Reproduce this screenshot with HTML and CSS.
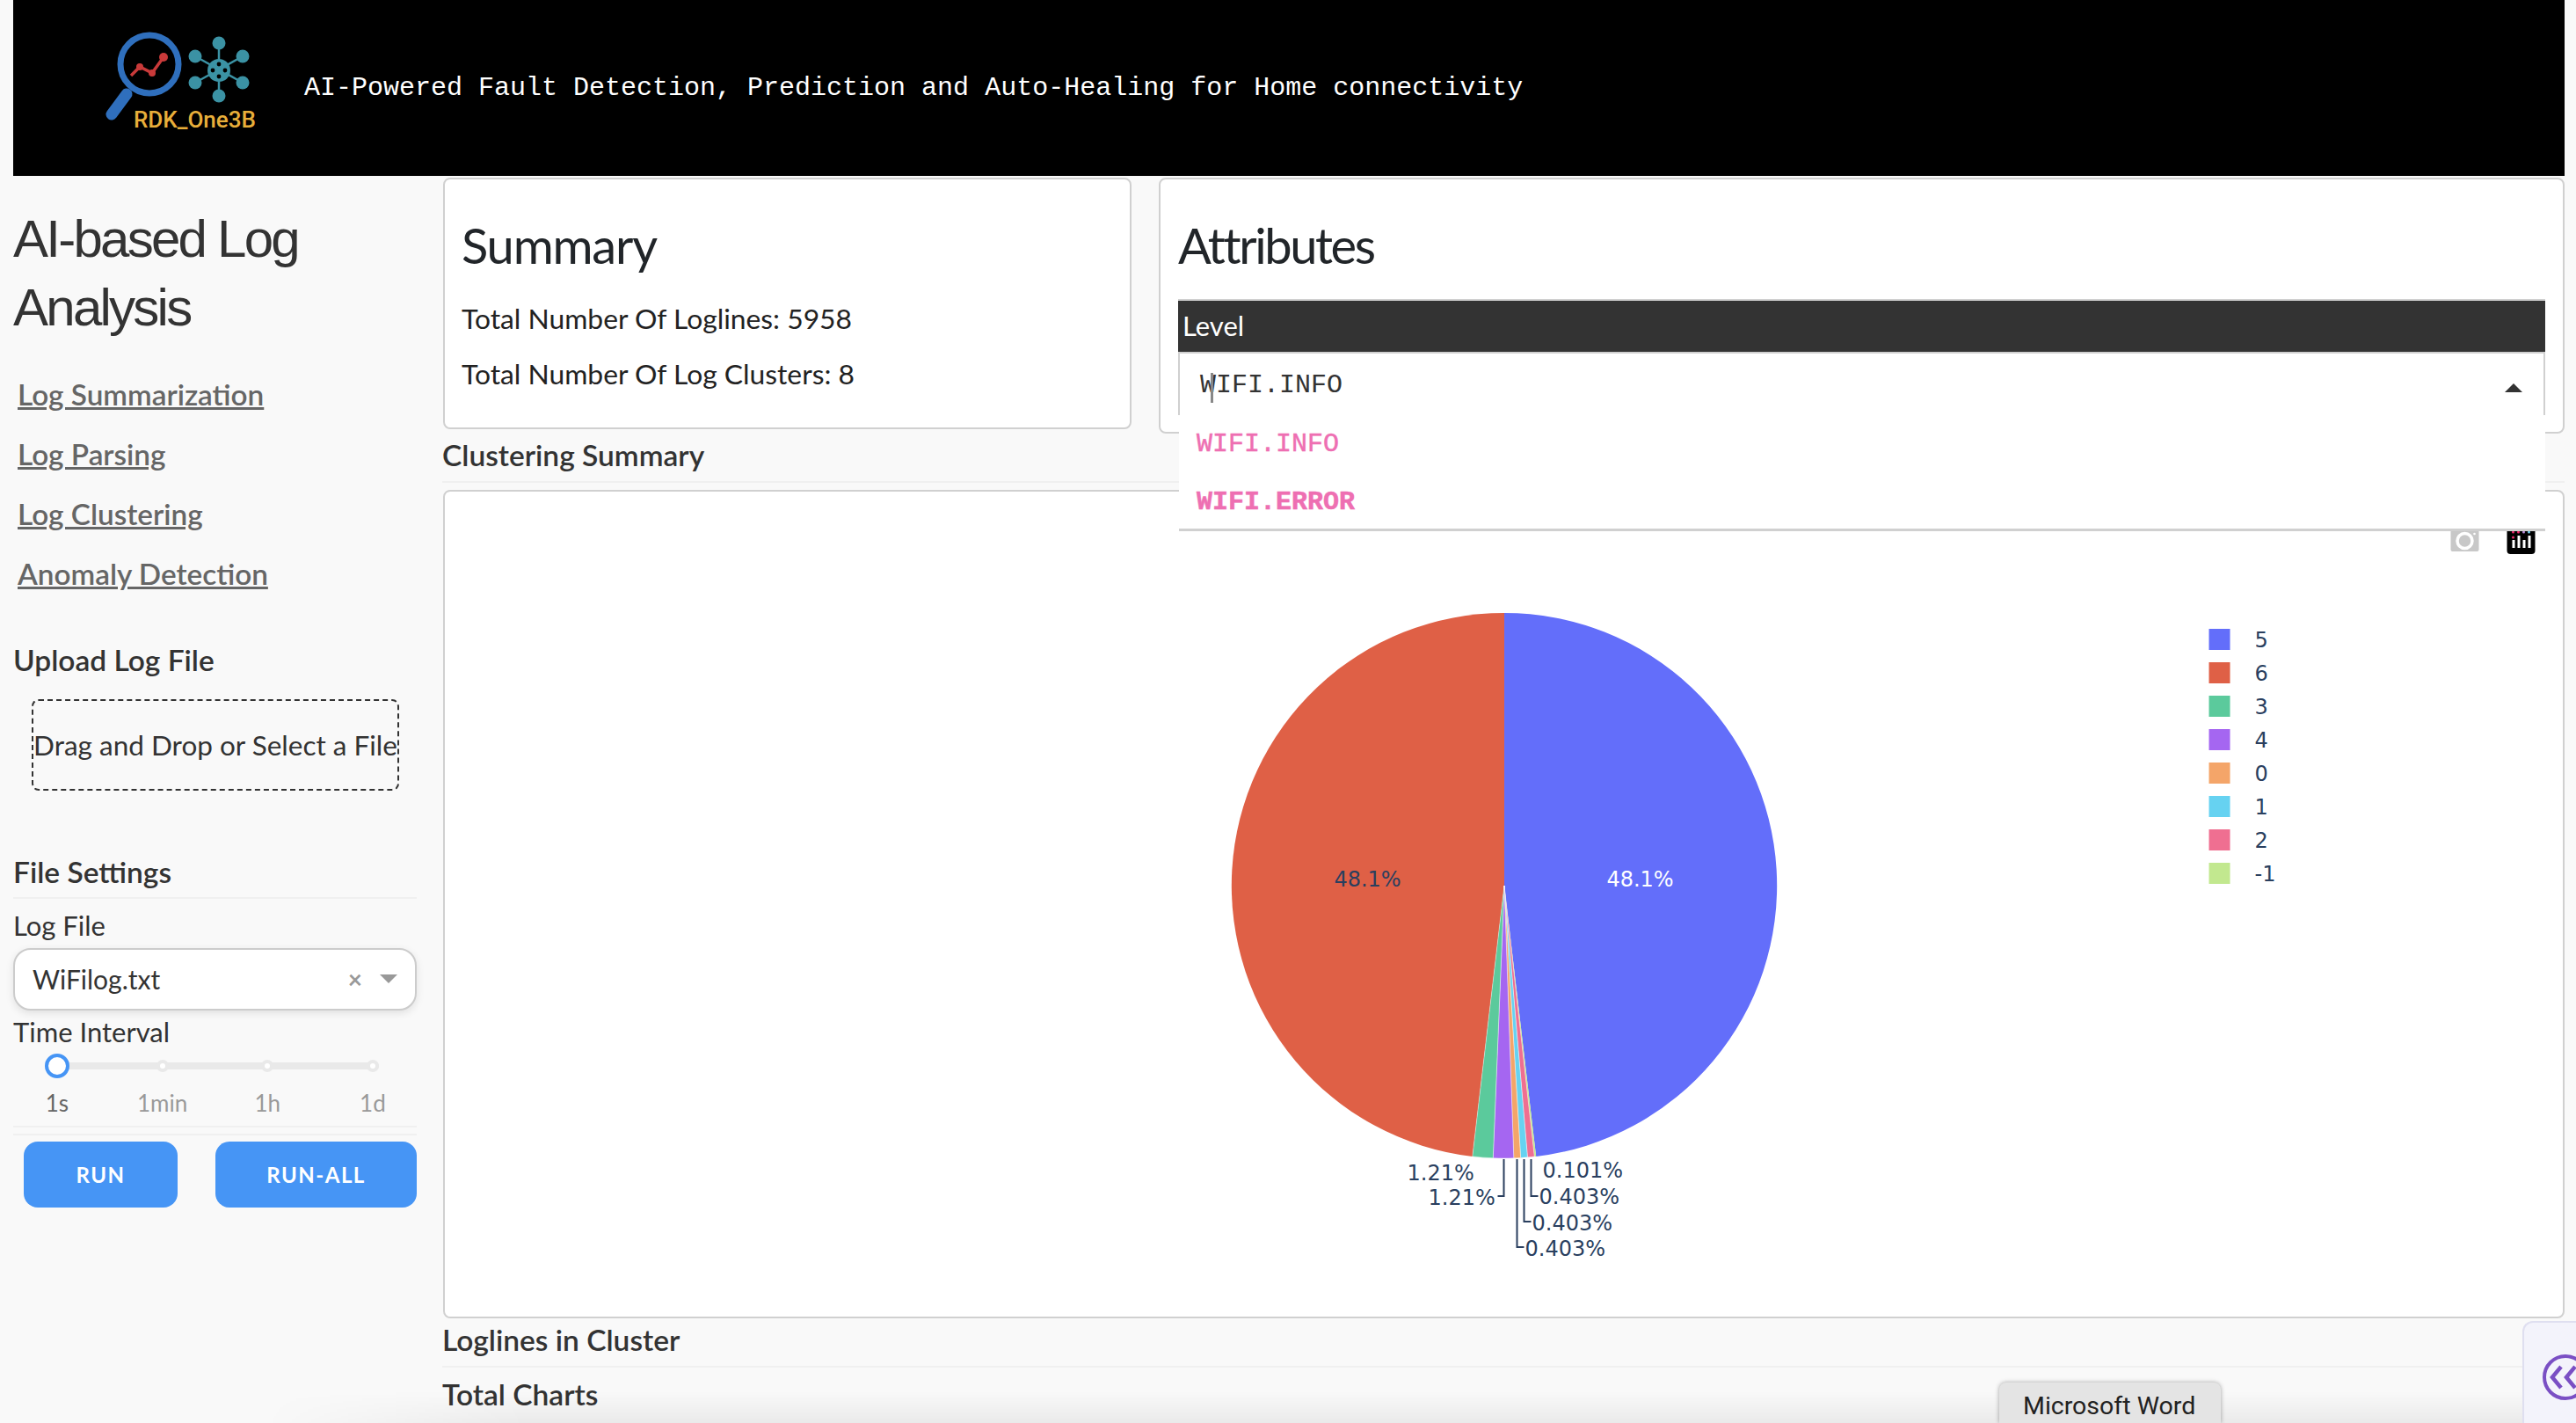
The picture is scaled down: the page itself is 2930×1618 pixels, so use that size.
FILE: index.html
```html
<!DOCTYPE html>
<html lang="en">
<head>
    <meta charset="UTF-8">
    <title>RDK_One3B - AI-based Log Analysis</title>
    <link rel="stylesheet" href="styles.css">
</head>
<body>
    <header class="banner">
        <svg class="logo" viewBox="0 0 200 130" aria-label="RDK_One3B logo">
            <g fill="none" stroke="#2f6fbd">
                <circle cx="65" cy="58" r="33" stroke-width="7"/>
                <path d="M39 92 L22 115" stroke-width="13" stroke-linecap="round"/>
            </g>
            <path d="M44 71 L54 61 L68 68 L81 50" fill="none" stroke="#c93a3a" stroke-width="3.5"/>
            <g fill="#c93a3a">
                <circle cx="54" cy="61" r="4"/>
                <circle cx="68" cy="68" r="4"/>
                <circle cx="81" cy="50" r="5"/>
            </g>
            <g stroke="#3b92a4" stroke-width="2.5">
                <path d="M144 34 V94 M117 49 L171 79 M171 49 L117 79"/>
            </g>
            <g fill="#3b92a4">
                <circle cx="144" cy="65" r="13"/>
                <circle cx="144" cy="34" r="7.5"/>
                <circle cx="171" cy="49" r="7.5"/>
                <circle cx="171" cy="79" r="7.5"/>
                <circle cx="144" cy="94" r="7.5"/>
                <circle cx="117" cy="79" r="7.5"/>
                <circle cx="117" cy="49" r="7.5"/>
            </g>
            <g fill="#000">
                <circle cx="144" cy="58" r="2.4"/>
                <circle cx="137" cy="65" r="2.4"/>
                <circle cx="151" cy="65" r="2.4"/>
                <circle cx="144" cy="72" r="2.4"/>
            </g>
            <text class="logo-text" x="47" y="130">RDK_One3B</text>
        </svg>
        <span class="banner-title">AI-Powered Fault Detection, Prediction and Auto-Healing for Home connectivity</span>
    </header>

    <div class="page">
        <aside class="sidebar">
            <h2 class="app-title">AI-based Log Analysis</h2>
            <nav class="side-nav">
                <a href="#">Log Summarization</a>
                <a href="#">Log Parsing</a>
                <a href="#">Log Clustering</a>
                <a href="#">Anomaly Detection</a>
            </nav>

            <h5 class="side-heading upload-heading">Upload Log File</h5>
            <div class="upload-box">Drag and Drop or Select a File</div>

            <h5 class="side-heading settings-heading">File Settings</h5>
            <label class="field-label">Log File</label>
            <div class="select-box">
                <span class="select-value">WiFilog.txt</span>
                <span class="select-clear">×</span>
                <span class="select-arrow"></span>
            </div>
            <label class="field-label interval-label">Time Interval</label>
            <div class="slider">
                <div class="slider-rail">
                    <span class="slider-handle"></span>
                    <span class="slider-dot"></span>
                    <span class="slider-dot"></span>
                    <span class="slider-dot"></span>
                </div>
                <div class="slider-marks">
                    <span class="mark-active">1s</span>
                    <span>1min</span>
                    <span>1h</span>
                    <span>1d</span>
                </div>
            </div>
            <div class="button-row">
                <button class="btn btn-run">RUN</button>
                <button class="btn btn-all">RUN-ALL</button>
            </div>
        </aside>

        <main class="content">
            <div class="top-row">
                <section class="card summary-card">
                    <h3 class="card-title">Summary</h3>
                    <p class="summary-line">Total Number Of Loglines: 5958</p>
                    <p class="summary-line">Total Number Of Log Clusters: 8</p>
                </section>
                <section class="card attributes-card">
                    <h3 class="card-title">Attributes</h3>
                    <div class="table-head">Level</div>
                    <div class="table-cell">
                        <span class="cell-value">WIFI.INFO</span>
                        <span class="text-cursor"></span>
                        <span class="cell-arrow"></span>
                    </div>
                    <div class="dropdown">
                        <div class="dropdown-option">WIFI.INFO</div>
                        <div class="dropdown-option option-bold">WIFI.ERROR</div>
                    </div>
                </section>
            </div>

            <h5 class="section-title clustering-title">Clustering Summary</h5>
            <section class="card chart-card">
                <svg class="chart" viewBox="506 559 2408 938">
                    <!-- modebar -->
                    <g class="modebar">
                        <path d="M2789 600 H2797 L2800 596 H2808 L2811 600 H2817 Q2819 600 2819 602 V625 Q2819 627 2817 627 H2789 Q2787 627 2787 625 V602 Q2787 600 2789 600 Z" fill="#c8c8c8"/>
                        <circle cx="2803" cy="615" r="8.5" fill="none" stroke="#fff" stroke-width="3.5"/>
                        <circle cx="2814" cy="607" r="1.3" fill="#fff"/>
                        <rect x="2851" y="594" width="32" height="36" rx="4" fill="#000"/>
                        <g fill="#fff">
                            <rect x="2857" y="614" width="3" height="9"/>
                            <rect x="2863" y="609" width="3" height="14"/>
                            <rect x="2869" y="614" width="3" height="9"/>
                            <rect x="2875" y="609" width="3" height="14"/>
                        </g>
                        <circle cx="2858" cy="605" r="1.5" fill="#ef2b6e"/>
                        <circle cx="2864" cy="605" r="1.5" fill="#ef2b6e"/>
                        <circle cx="2870" cy="605" r="1.5" fill="#b98bd8"/>
                        <circle cx="2876" cy="605" r="1.5" fill="#6fd0ee"/>
                        <circle cx="2858" cy="611" r="1.5" fill="#ef2b6e"/>
                    </g>

                    <!-- pie: 2868, 6, 24, 24, 24, 72, 72, 2868 of 5958 lines -->
                    <path fill="#df6046" d="M1710.5 1007 L1674.3 1314.9 A310 310 0 0 1 1710.5 697 Z"/>
                    <path fill="#636efa" d="M1710.5 1007 V697 A310 310 0 0 1 1746.7 1314.9 Z"/>
                    <path fill="#c2e88f" d="M1710.5 1007 L1746.7 1314.9 A310 310 0 0 1 1744.75 1315.1 Z"/>
                    <g stroke="#fff" stroke-width="0.4">
                        <path fill="#ef6f91" d="M1710.5 1007 L1744.75 1315.1 A310 310 0 0 1 1736.95 1315.87 Z"/>
                        <path fill="#66d2f1" d="M1710.5 1007 L1736.95 1315.87 A310 310 0 0 1 1729.12 1316.44 Z"/>
                        <path fill="#f4a569" d="M1710.5 1007 L1729.12 1316.44 A310 310 0 0 1 1721.29 1316.81 Z"/>
                        <path fill="#a566f1" d="M1710.5 1007 L1721.29 1316.81 A310 310 0 0 1 1697.76 1316.74 Z"/>
                        <path fill="#5bca9c" d="M1710.5 1007 L1697.76 1316.74 A310 310 0 0 1 1674.3 1314.9 Z"/>
                    </g>

                    <!-- leader lines -->
                    <g fill="none" stroke="#2a3f5f" stroke-width="2">
                        <path d="M1710 1318 V1360 H1703"/>
                        <path d="M1725 1318 V1418 H1733"/>
                        <path d="M1733 1318 V1389 H1741"/>
                        <path d="M1741 1318 V1360 H1749"/>
                    </g>

                    <g class="pie-label">
                        <text class="label-white" x="1865" y="1008" text-anchor="middle">48.1%</text>
                        <text x="1555" y="1008" text-anchor="middle">48.1%</text>
                        <text x="1600" y="1342">1.21%</text>
                        <text x="1624" y="1370">1.21%</text>
                        <text x="1754" y="1339">0.101%</text>
                        <text x="1750" y="1369">0.403%</text>
                        <text x="1742" y="1399">0.403%</text>
                        <text x="1734" y="1428">0.403%</text>
                    </g>

                    <!-- legend -->
                    <g>
                        <rect x="2512" y="715" width="24" height="24" fill="#636efa"/>
                        <rect x="2512" y="753" width="24" height="24" fill="#df6046"/>
                        <rect x="2512" y="791" width="24" height="24" fill="#5bca9c"/>
                        <rect x="2512" y="829" width="24" height="24" fill="#a566f1"/>
                        <rect x="2512" y="867" width="24" height="24" fill="#f4a569"/>
                        <rect x="2512" y="905" width="24" height="24" fill="#66d2f1"/>
                        <rect x="2512" y="943" width="24" height="24" fill="#ef6f91"/>
                        <rect x="2512" y="981" width="24" height="24" fill="#c2e88f"/>
                    </g>
                    <g class="pie-label">
                        <text x="2564" y="736">5</text>
                        <text x="2564" y="774">6</text>
                        <text x="2564" y="812">3</text>
                        <text x="2564" y="850">4</text>
                        <text x="2564" y="888">0</text>
                        <text x="2564" y="926">1</text>
                        <text x="2564" y="964">2</text>
                        <text x="2564" y="1002">-1</text>
                    </g>
                </svg>
            </section>

            <h5 class="section-title loglines-title">Loglines in Cluster</h5>
            <h5 class="section-title">Total Charts</h5>
        </main>
    </div>

    <div class="dock-shadow"></div>
    <div class="word-tip">Microsoft Word</div>
    <div class="side-tab">
        <svg class="side-tab-icon" viewBox="0 0 61 116">
            <circle cx="47" cy="62" r="24" fill="none" stroke="#7a4fc4" stroke-width="4"/>
            <path d="M42 50 L32 62 L42 74 M58 50 L48 62 L58 74" fill="none" stroke="#7a4fc4" stroke-width="4.5"/>
        </svg>
    </div>
</body>
</html>
```

FILE: styles.css
```css
html, body {
    margin: 0;
    height: 1618px;
    overflow: hidden;
}
body {
    position: relative;
    background-color: #f9f9f9;
    font-family: "Lato", sans-serif;
    color: #333;
}

/* banner */
.banner {
    display: flex;
    align-items: center;
    height: 200px;
    margin: 0 13px 0 15px;
    background: #000;
}
.logo {
    width: 200px;
    height: 130px;
    margin: 0 0 40px 90px;
    flex: none;
    overflow: visible;
}
.logo-text {
    font-family: "Roboto", sans-serif;
    font-size: 26px;
    font-weight: 500;
    fill: #e8ae3a;
}
.banner-title {
    margin-left: 41px;
    font-family: "Liberation Mono", monospace;
    font-size: 30px;
    color: #fff;
}

.page {
    display: flex;
}

/* sidebar */
.sidebar {
    width: 459px;
    flex: none;
    margin: 0 30px 0 15px;
}
.app-title {
    margin: 33px 0 0;
    font-family: "Liberation Sans", sans-serif;
    font-size: 60px;
    font-weight: 400;
    line-height: 78px;
    letter-spacing: -2.75px;
    color: #333;
}
.side-nav {
    display: flex;
    flex-direction: column;
    gap: 28px;
    margin: 39px 0 0 5px;
}
.side-nav a {
    font-size: 33.3px;
    line-height: 40px;
    font-weight: 600;
    color: #666;
}
.side-heading {
    margin: 0;
    font-size: 33.5px;
    line-height: 40px;
    font-weight: 600;
    color: #333;
}
.upload-heading {
    margin-top: 58px;
}
.upload-box {
    display: flex;
    align-items: center;
    justify-content: center;
    width: 418px;
    height: 104px;
    box-sizing: border-box;
    margin: 25px 0 0 21px;
    border: 2px dashed #333;
    border-radius: 8px;
    font-size: 31.5px;
    white-space: nowrap;
}
.settings-heading {
    margin-top: 72px;
    padding-bottom: 9px;
    border-bottom: 2px solid #f0f0f0;
}
.field-label {
    display: block;
    margin-top: 10px;
    font-size: 31px;
    line-height: 40px;
}
.select-box {
    display: flex;
    align-items: center;
    height: 71px;
    box-sizing: border-box;
    margin-top: 6px;
    padding: 0 20px 2px;
    background: #fff;
    border: 2px solid #ccc;
    border-radius: 20px;
    box-shadow: 0 3px 10px rgba(0, 0, 0, 0.1);
}
.select-value {
    flex: 1;
    font-size: 30px;
}
.select-clear {
    margin-right: 20px;
    font-size: 28px;
    font-weight: 700;
    color: #999;
}
.select-arrow {
    width: 0;
    height: 0;
    border-left: 10px solid transparent;
    border-right: 10px solid transparent;
    border-top: 10px solid #999;
}
.interval-label {
    margin-top: 4px;
}
.slider {
    margin-top: 4px;
    padding-bottom: 10px;
    border-bottom: 2px solid #f0f0f0;
}
.slider-rail {
    position: relative;
    display: flex;
    justify-content: space-between;
    align-items: center;
    height: 8px;
    margin: 15px 43px 0 50px;
    background: #e9e9e9;
    border-radius: 4px;
}
.slider-handle {
    width: 28px;
    height: 28px;
    box-sizing: border-box;
    background: #fff;
    border: 4px solid #4695f5;
    border-radius: 50%;
    margin: 0 -7px 0 -14px;
}
.slider-dot {
    width: 14px;
    height: 14px;
    box-sizing: border-box;
    background: #fff;
    border: 4px solid #e9e9e9;
    border-radius: 50%;
}
.slider-marks {
    display: grid;
    grid-template-columns: repeat(4, 119.7px);
    margin: 22px 0 0 -10px;
    font-size: 26px;
    line-height: 32px;
    color: #999;
    text-align: center;
}
.mark-active {
    color: #666;
}
.button-row {
    display: flex;
    justify-content: space-between;
    margin-top: 7px;
    padding: 7px 0 0 12px;
    border-top: 2px solid #f0f0f0;
}
.btn {
    height: 75px;
    border: none;
    border-radius: 16px;
    background: #4695f5;
    color: #fff;
    font-family: "Lato", sans-serif;
    font-size: 24px;
    font-weight: 700;
    letter-spacing: 1.5px;
}
.btn-run {
    width: 175px;
}
.btn-all {
    width: 229px;
}

/* main column */
.content {
    width: 2413px;
    flex: none;
}
.top-row {
    display: flex;
    align-items: flex-start;
    gap: 31px;
    margin-top: 2px;
}
.card {
    box-sizing: border-box;
    background: #fff;
    border: 2px solid #d0d0d0;
    border-radius: 8px;
}
.summary-card {
    width: 783px;
    height: 286px;
    padding: 0 19px;
}
.attributes-card {
    position: relative;
    width: 1599px;
    height: 291px;
    padding: 0 20px;
}
.card-title {
    margin: 44px 0 0;
    font-size: 56px;
    font-weight: 400;
    line-height: 62px;
    letter-spacing: -1.2px;
    color: #212529;
}
.attributes-card .card-title {
    letter-spacing: -2.4px;
}
.summary-line {
    margin: 0;
    font-size: 31.8px;
    line-height: 63px;
    color: #222;
}
.card-title + .summary-line {
    margin-top: 21px;
}
.table-head {
    height: 62px;
    box-sizing: border-box;
    margin-top: 30px;
    padding-left: 5px;
    background: #333;
    border: 2px solid #d0d0d0;
    border-width: 2px 0;
    font-size: 31px;
    line-height: 56px;
    color: #fff;
}
.table-cell {
    position: relative;
    display: flex;
    align-items: center;
    height: 68px;
    padding: 2px 0 0 23px;
    border: solid #d0d0d0;
    border-width: 0 2px;
    background: #fff;
}
.cell-value {
    font-family: "Liberation Mono", monospace;
    font-size: 30px;
    color: #333;
}
.text-cursor {
    position: absolute;
    left: 35px;
    top: 22px;
    width: 3px;
    height: 34px;
    background: #888;
}
.cell-arrow {
    position: absolute;
    right: 24px;
    top: 34px;
    width: 0;
    height: 0;
    border-left: 10px solid transparent;
    border-right: 10px solid transparent;
    border-bottom: 10px solid #333;
}
.dropdown {
    position: absolute;
    left: 21px;
    top: 268px;
    z-index: 2;
    width: 1554px;
    height: 132px;
    box-sizing: border-box;
    padding: 4px 20px 0;
    background: #fff;
    border-bottom: 3px solid #d0d0d0;
}
.dropdown-option {
    height: 66px;
    font-family: "Liberation Mono", monospace;
    font-size: 30px;
    line-height: 58px;
    color: #ee6fb2;
    -webkit-text-stroke: 0.5px #ee6fb2;
}
.option-bold {
    font-weight: 700;
}
.section-title {
    margin: 0 0 0 -1px;
    font-size: 33.5px;
    font-weight: 600;
    line-height: 40px;
    color: #333;
}
.clustering-title {
    height: 52px;
    margin-top: 4px;
    box-sizing: border-box;
    border-bottom: 2px solid #f0f0f0;
    margin-bottom: 8px;
}
.chart-card {
    height: 942px;
}
.chart {
    display: block;
    width: 100%;
    height: 100%;
}
.pie-label {
    font-family: "DejaVu Sans", sans-serif;
    font-size: 24px;
    fill: #2a3f5f;
}
.label-white {
    fill: #fff;
}
.loglines-title {
    height: 56px;
    box-sizing: border-box;
    padding-top: 4px;
    border-bottom: 2px solid #f0f0f0;
    margin-bottom: 10px;
}

/* desktop bits lying over the page */
.dock-shadow {
    position: absolute;
    left: 300px;
    right: 0;
    bottom: 0;
    height: 36px;
    background: linear-gradient(rgba(0, 0, 0, 0), rgba(0, 0, 0, 0.06));
    -webkit-mask-image: linear-gradient(90deg, rgba(0, 0, 0, 0), #000 300px);
    mask-image: linear-gradient(90deg, rgba(0, 0, 0, 0), #000 300px);
}
.word-tip {
    position: absolute;
    left: 2274px;
    top: 1572px;
    width: 252px;
    height: 46px;
    box-sizing: border-box;
    padding: 10px 0 0 27px;
    background: #e4e4e4;
    border-radius: 8px 8px 0 0;
    box-shadow: 0 0 5px rgba(0, 0, 0, 0.35);
    font-family: "Roboto", sans-serif;
    font-size: 28.5px;
    line-height: 34px;
    color: #222;
}
.side-tab {
    position: absolute;
    left: 2869px;
    top: 1502px;
    width: 61px;
    height: 116px;
    box-sizing: border-box;
    background: #f3f3fb;
    border: solid #dfdff0;
    border-width: 2px 0 0 2px;
    border-radius: 12px 0 0 0;
}
.side-tab-icon {
    display: block;
    width: 61px;
    height: 116px;
}
```
